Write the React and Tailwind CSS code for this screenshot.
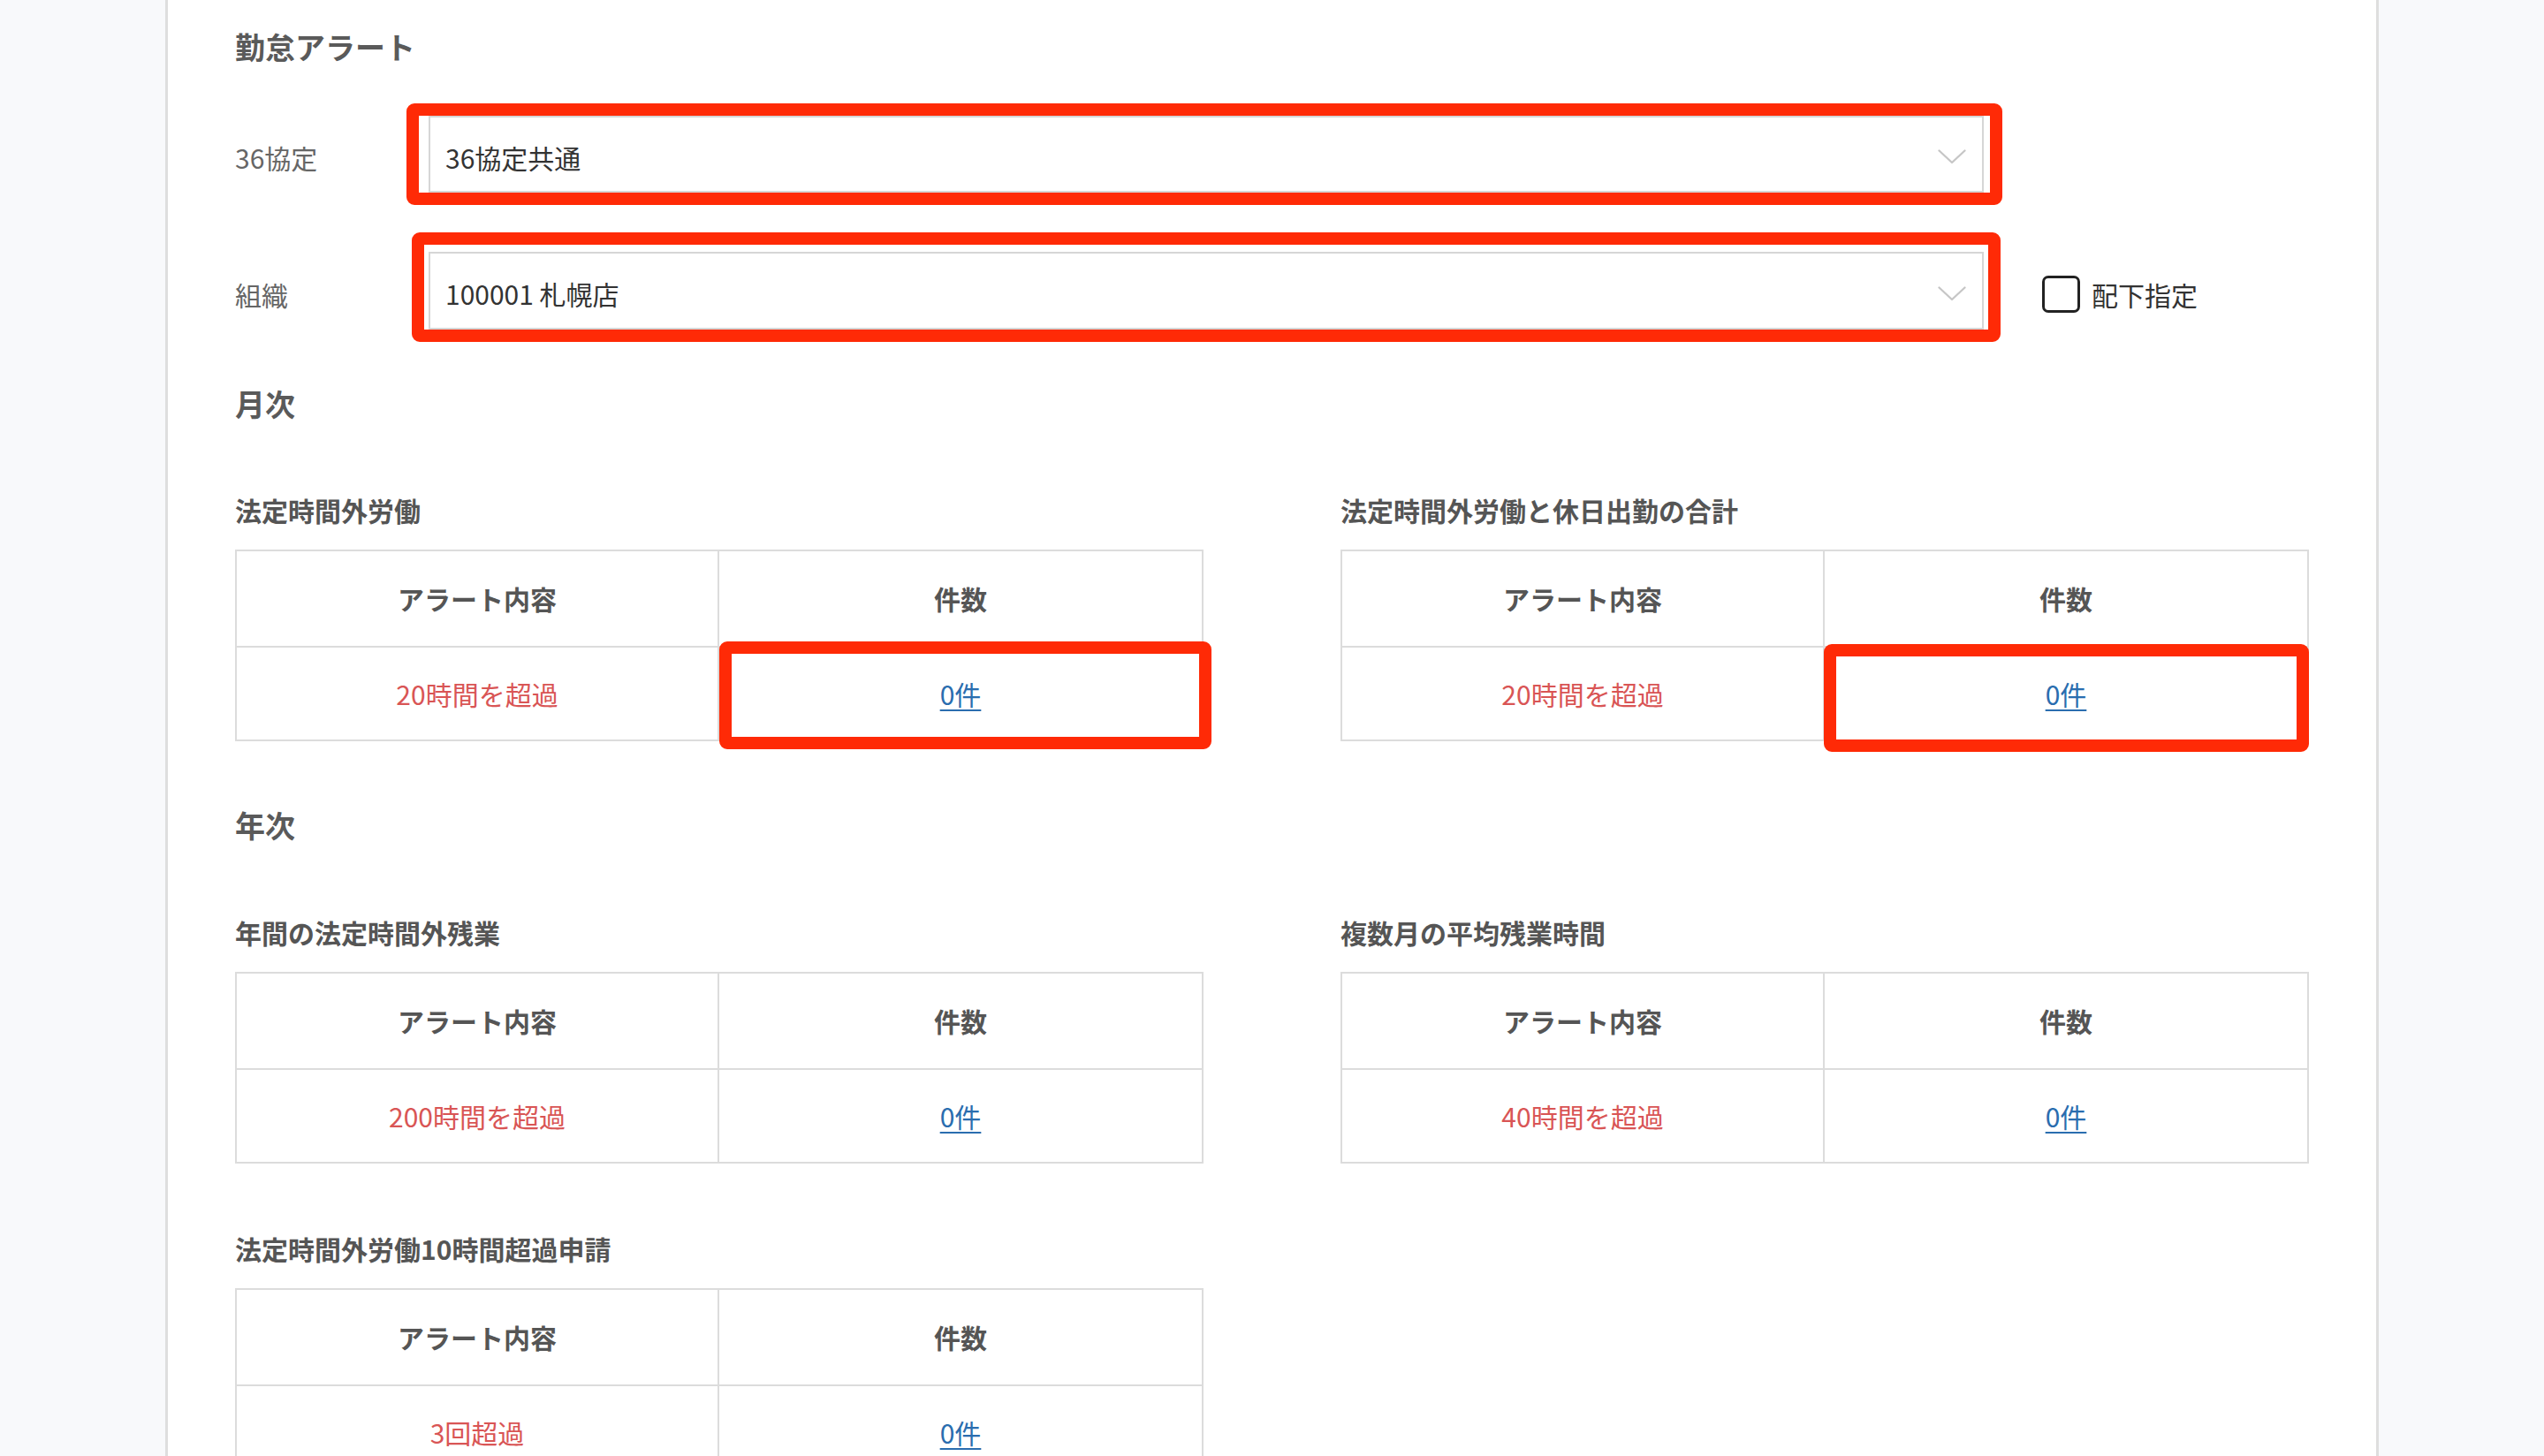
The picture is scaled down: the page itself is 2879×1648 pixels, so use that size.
import React from "react";

const FONT = { fontFamily: '"Noto Sans CJK JP", "Noto Sans", sans-serif' };

function Chevron() {
  return (
    <svg className="mt-[6px]" width="32" height="17" viewBox="0 0 32 17" fill="none">
      <polyline points="1.5,1.5 16,15 30.5,1.5" stroke="#c6c6c6" strokeWidth="2.3" strokeLinecap="round" strokeLinejoin="round" />
    </svg>
  );
}

function SelectBox({ value, h }) {
  return (
    <div className={`relative flex w-[1760px] items-center justify-between border-2 border-[#d6d6d6] bg-white pl-[17px] pr-[18px] ${h}`}>
      <span className="pt-[6px] text-[30px] leading-[40px] text-[#333]">{value}</span>
      <Chevron />
    </div>
  );
}

function RedBox({ className }) {
  return <div className={`pointer-events-none absolute rounded-[9px] border-[14px] border-[#ff2a06] ${className}`} />;
}

function AlertTable({ content, redBox }) {
  return (
    <div className="relative w-[1096px] border-2 border-[#dcdcdc]">
      <div className="grid h-[109px] grid-cols-2 border-b-2 border-[#dcdcdc]">
        <div className="flex items-center justify-center border-r-2 border-[#dcdcdc] text-[30px] font-bold text-[#555]">アラート内容</div>
        <div className="flex items-center justify-center text-[30px] font-bold text-[#555]">件数</div>
      </div>
      <div className="grid h-[104px] grid-cols-2">
        <div className="flex items-center justify-center border-r-2 border-[#dcdcdc] text-[30px] text-[#d95555]">{content}</div>
        <div className="flex items-center justify-center">
          <a className="text-[30px] text-[#2a6daf] underline decoration-[2px] underline-offset-[5px]">0件</a>
        </div>
      </div>
      {redBox}
    </div>
  );
}

function Sub({ children }) {
  return <div className="text-[30px] font-bold leading-[44px] text-[#555]">{children}</div>;
}

export default function App() {
  return (
    <div style={FONT} className="h-[1648px] w-full overflow-hidden bg-[#f8f9fb]">
      <div className="ml-[187px] h-full w-[2505px] border-x-[3px] border-[#dedede] bg-white pl-[76px]">
        <div className="pt-[28px] text-[34px] font-bold leading-[50px] text-[#5a5a5a]">勤怠アラート</div>

        <div className="mt-[53px] flex items-center">
          <div className="w-[219px] pt-[7px] text-[30px] leading-[40px] text-[#666]">36協定</div>
          <div className="relative">
            <SelectBox value="36協定共通" h="h-[87px]" />
            <RedBox className="left-[-25px] top-[-14px] h-[115px] w-[1806px]" />
          </div>
        </div>

        <div className="mt-[67px] flex items-center">
          <div className="w-[219px] pt-[7px] text-[30px] leading-[40px] text-[#666]">組織</div>
          <div className="relative">
            <SelectBox value="100001 札幌店" h="h-[88px]" />
            <RedBox className="left-[-19px] top-[-22px] h-[124px] w-[1798px]" />
          </div>
          <div className="ml-[66px] flex items-center pt-[7px]">
            <div className="h-[42px] w-[43px] rounded-[7px] border-[3px] border-[#222] bg-white" />
            <span className="ml-[13px] text-[30px] leading-[40px] text-[#333]">配下指定</span>
          </div>
        </div>

        <div className="mt-[59px] text-[34px] font-bold leading-[50px] text-[#5a5a5a]">月次</div>

        <div className="mt-[73px] grid grid-cols-[1096px_1096px] gap-x-[155px]">
          <div>
            <Sub>法定時間外労働</Sub>
            <div className="mt-[23px]">
              <AlertTable
                content="20時間を超過"
                redBox={<RedBox className="left-[546px] top-[102px] h-[122px] w-[557px]" />}
              />
            </div>
          </div>
          <div>
            <Sub>法定時間外労働と休日出勤の合計</Sub>
            <div className="mt-[23px]">
              <AlertTable
                content="20時間を超過"
                redBox={<RedBox className="left-[545px] top-[105px] h-[122px] w-[549px]" />}
              />
            </div>
          </div>
        </div>

        <div className="mt-[70px] text-[34px] font-bold leading-[50px] text-[#5a5a5a]">年次</div>

        <div className="mt-[74px] grid grid-cols-[1096px_1096px] gap-x-[155px]">
          <div>
            <Sub>年間の法定時間外残業</Sub>
            <div className="mt-[23px]">
              <AlertTable content="200時間を超過" />
            </div>
          </div>
          <div>
            <Sub>複数月の平均残業時間</Sub>
            <div className="mt-[23px]">
              <AlertTable content="40時間を超過" />
            </div>
          </div>
        </div>

        <div className="mt-[74px]">
          <Sub>法定時間外労働10時間超過申請</Sub>
          <div className="mt-[23px]">
            <AlertTable content="3回超過" />
          </div>
        </div>
      </div>
    </div>
  );
}
